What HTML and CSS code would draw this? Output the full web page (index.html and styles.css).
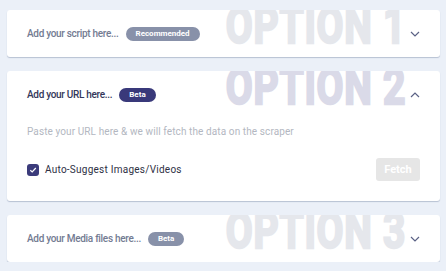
FILE: index.html
```html
<!DOCTYPE html>
<html>
<head>
<meta charset="utf-8">
<link rel="stylesheet" href="styles.css">
</head>
<body>
<div class="list">
  <div class="card">
    <div class="ghost">OPTION 1</div>
    <div class="head">
      <span class="title">Add your script here...</span>
      <span class="badge muted">Recommended</span>
      <svg class="chev" width="10" height="6" viewBox="0 0 10 6"><polyline points="1,1 5,5 9,1" fill="none" stroke="#5b6285" stroke-width="1.2"/></svg>
    </div>
  </div>
  <div class="card open">
    <div class="ghost">OPTION 2</div>
    <div class="head">
      <span class="title">Add your URL here...</span>
      <span class="badge dark">Beta</span>
      <svg class="chev" width="10" height="6" viewBox="0 0 10 6"><polyline points="1,5 5,1 9,5" fill="none" stroke="#5b6285" stroke-width="1.2"/></svg>
    </div>
    <div class="body">
      <p class="hint">Paste your URL here &amp; we will fetch the data on the scraper</p>
      <div class="row">
        <label class="check">
          <span class="box"><svg width="8" height="8" viewBox="0 0 8 8"><polyline points="1.3,4.2 3.2,6 6.8,2" fill="none" stroke="#fff" stroke-width="1.2"/></svg></span>
          <span class="label">Auto-Suggest Images/Videos</span>
        </label>
        <button class="fetch">Fetch</button>
      </div>
    </div>
  </div>
  <div class="card">
    <div class="ghost">OPTION 3</div>
    <div class="head">
      <span class="title">Add your Media files here...</span>
      <span class="badge muted">Beta</span>
      <svg class="chev" width="10" height="6" viewBox="0 0 10 6"><polyline points="1,1 5,5 9,1" fill="none" stroke="#5b6285" stroke-width="1.2"/></svg>
    </div>
  </div>
</div>
</body>
</html>
```

FILE: styles.css
```css
html, body {
  margin: 0;
  padding: 0;
  background: #ebf0f8;
  font-family: Roboto, "Liberation Sans", sans-serif;
}
.list {
  display: flex;
  flex-direction: column;
  gap: 14px;
  padding: 10px 6px 0 7px;
}
.card {
  position: relative;
  overflow: hidden;
  background: #fff;
  border-radius: 3px;
  box-shadow: 0 1px 1px rgba(120, 135, 165, 0.45);
}
.ghost {
  position: absolute;
  right: 34px;
  top: -9px;
  font-size: 50px;
  line-height: 50px;
  font-weight: 700;
  color: #e5e7ec;
  -webkit-text-stroke: 2.4px #e5e7ec;
  transform: scaleX(0.78);
  transform-origin: right top;
  white-space: nowrap;
  letter-spacing: 1px;
}
.open .ghost {
  color: #dadae8;
  -webkit-text-stroke-color: #dadae8;
}
.head {
  position: relative;
  display: flex;
  align-items: center;
  height: 47px;
  padding: 0 20px;
  gap: 7px;
}
.title {
  font-size: 10px;
  letter-spacing: -0.3px;
  color: #737b92;
  font-weight: 500;
}
.open .title {
  color: #34375a;
}
.badge {
  display: inline-flex;
  align-items: center;
  height: 14px;
  padding: 0 10px;
  border-radius: 7px;
  font-size: 8px;
  font-weight: 700;
  color: #fff;
}
.badge.muted {
  background: #8891a9;
}
.badge.dark {
  background: #39397a;
}
.chev {
  margin-left: auto;
}
.body {
  position: relative;
  padding: 0 20px 20px;
}
.hint {
  margin: 7px 0 0;
  font-size: 10px;
  letter-spacing: 0.1px;
  line-height: 14px;
  color: #b3b7c1;
}
.row {
  display: flex;
  align-items: center;
  justify-content: space-between;
  margin-top: 19px;
}
.check {
  display: flex;
  align-items: center;
  gap: 6px;
}
.box {
  width: 12px;
  height: 12px;
  border-radius: 3px;
  background: #3b3b7b;
  display: flex;
  align-items: center;
  justify-content: center;
}
.label {
  font-size: 10px;
  color: #2e3044;
  letter-spacing: 0.25px;
}
.fetch {
  width: 44px;
  height: 23px;
  border: 0;
  border-radius: 3px;
  background: #e6e6e6;
  color: #fff;
  font-family: Roboto, "Liberation Sans", sans-serif;
  font-weight: 700;
  font-size: 11px;
  padding: 0;
}
```
